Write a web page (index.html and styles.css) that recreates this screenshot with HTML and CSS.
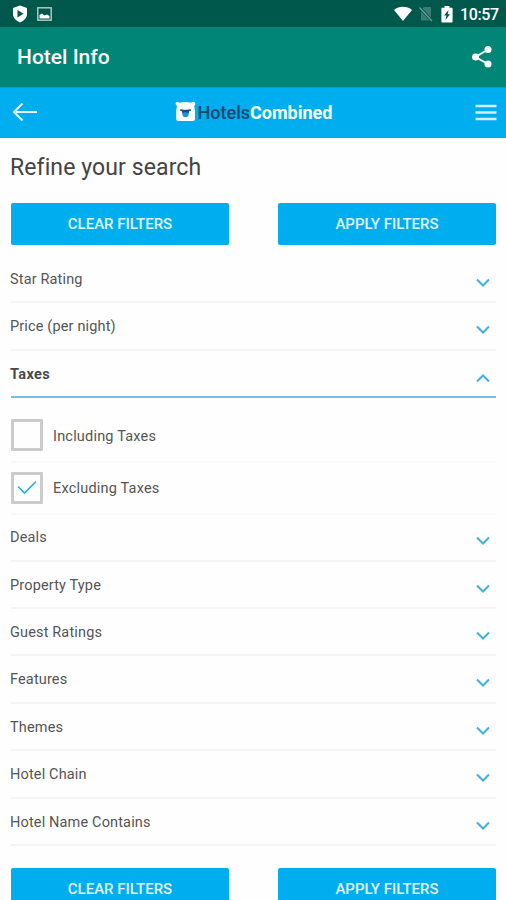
FILE: index.html
```html
<!DOCTYPE html>
<html lang="en">
<head>
<meta charset="utf-8">
<title>Hotel Info</title>
<link rel="stylesheet" href="styles.css">
</head>
<body>
<svg width="0" height="0" class="defs">
  <symbol id="chevron" viewBox="0 0 16 10"><path d="M2 1.500 8 7.500 14 1.500" fill="none" stroke="#42aee6" stroke-width="2"/></symbol>
</svg>
<div class="status">
  <svg class="shield" width="16" height="18" viewBox="0 0 16 18"><path d="M8 .5 15 3v6c0 4-3 6.800-7 8.500C4 15.800 1 13 1 9V3z" fill="#fff"/><path d="M5.500 5 11.500 8.700 5.500 12.400z" fill="#00574b"/></svg>
  <svg class="photo" width="15" height="14" viewBox="0 0 15 14"><rect x=".8" y=".8" width="13.400" height="12.400" fill="none" stroke="#b5d0cb" stroke-width="1.400"/><path d="M2.500 11.500V8L5 6.500l2.500 2L10 7.500l2.500 1.500v2.500z" fill="#fff"/></svg>
  <span class="spacer"></span>
  <svg class="wifi" width="20" height="16" viewBox="0 0 20 16"><path d="M1 4C6-.2 14-.2 19 4L10 15z" fill="#fff"/></svg>
  <svg class="nosim" width="14" height="16" viewBox="0 0 14 16"><path d="M5 1H12v13.500H2V4z" fill="#397c72"/><path d="M.5 1.500 13 15" stroke="#00574b" stroke-width="3"/><path d="M.5 1.500 13 15" stroke="#6c9f97" stroke-width="1.300"/></svg>
  <svg class="battery" width="12" height="17" viewBox="0 0 12 17"><path d="M3.500 0h5v1.800H11q.6 0 .6.600v13.200q0 1-.9 1H1.300q-.9 0-.9-1V2.400q0-.6.600-.6h2.500z" fill="#fff"/><path d="M7.500 4 3 9.500h2.500L4.500 14 9 8.300H6.700z" fill="#00574b"/></svg>
  <span class="time">10:57</span>
</div>
<header class="appbar">
  <span class="title">Hotel Info</span>
  <svg width="22" height="24" viewBox="0 0 22 24"><path d="M17 4.500 4.500 12 17 19" fill="none" stroke="#fff" stroke-width="2"/><g fill="#fff"><circle cx="17" cy="4.500" r="3.500"/><circle cx="4.500" cy="12" r="3.500"/><circle cx="17" cy="19" r="3.500"/></g></svg>
</header>
<nav class="sitebar">
  <svg class="back" width="26" height="20" viewBox="0 0 26 20"><path d="M10.500 .5 2 9l8.500 8.500M2 9h23" fill="none" stroke="#e9f9ff" stroke-width="2"/></svg>
  <div class="logo">
    <svg width="21" height="21" viewBox="0 0 21 21"><path d="M.8 1.500Q2.500.3 4.500 1.800 10.500.2 16 1.800 18-.2 20 1.500q.9 1.800-.8 3.500l.8 5v8q0 2-2 2H3.200q-2 0-2-2v-8l.8-5Q0 3 .8 1.500z" fill="#fff"/><path d="M5 8.500q2-.8 3.500.3h4Q14 7.700 16 8.500v1.300l-1.700.3q-.4 3-2 3.900H9q-2-.9-2.300-3.900L5 9.800z" fill="#194e79"/><path d="M7.300 12q3.200-1.700 6.400 0 .3 4.200-3.200 4.200T7.300 12z" fill="#1596dc"/></svg>
    <span class="hotels">Hotels</span><span class="combined">Combined</span>
  </div>
  <svg class="menu" width="22" height="18" viewBox="0 0 22 18"><path d="M.5 2h21M.5 8.500h21M.5 15h21" stroke="#d4f0fc" stroke-width="2.300"/></svg>
</nav>
<main>
  <h1>Refine your search</h1>
  <div class="actions"><button>CLEAR FILTERS</button><button>APPLY FILTERS</button></div>
  <section class="filters">
    <div class="row"><span>Star Rating</span><svg><use href="#chevron"/></svg></div>
    <div class="row"><span>Price (per night)</span><svg><use href="#chevron"/></svg></div>
    <div class="row open"><span>Taxes</span><svg><use href="#chevron"/></svg></div>
    <div class="option first"><span class="box"></span><span>Including Taxes</span></div>
    <div class="option"><span class="box"><svg width="20" height="16" viewBox="0 0 20 16"><path d="M1 6.500 7.500 13 19 1.500" fill="none" stroke="#27adeb" stroke-width="1.700"/></svg></span><span>Excluding Taxes</span></div>
    <div class="row deals"><span>Deals</span><svg><use href="#chevron"/></svg></div>
    <div class="row"><span>Property Type</span><svg><use href="#chevron"/></svg></div>
    <div class="row"><span>Guest Ratings</span><svg><use href="#chevron"/></svg></div>
    <div class="row"><span>Features</span><svg><use href="#chevron"/></svg></div>
    <div class="row"><span>Themes</span><svg><use href="#chevron"/></svg></div>
    <div class="row"><span>Hotel Chain</span><svg><use href="#chevron"/></svg></div>
    <div class="row"><span>Hotel Name Contains</span><svg><use href="#chevron"/></svg></div>
  </section>
  <div class="actions bottom"><button>CLEAR FILTERS</button><button>APPLY FILTERS</button></div>
</main>
</body>
</html>
```
FILE: styles.css
```css
* { box-sizing: border-box; }
html { overflow: hidden; }
body { margin: 0; width: 506px; height: 900px; overflow: hidden; background: #fefefe; font-family: Roboto, sans-serif; color: #555; }
svg { display: block; flex: none; }
.defs { display: none; }
.status { height: 27px; background: #00574b; display: flex; align-items: center; padding: 1px 8px 0 12px; color: #fff; }
.photo { margin-left: 9px; }
.spacer { flex: 1; }
.nosim { margin-left: 6px; }
.battery { margin-left: 8px; }
.time { margin-left: 7px; font-size: 16px; font-weight: 500; line-height: 26px; padding-top: 1px; width: 38px; white-space: nowrap; letter-spacing: -.4px; }
.appbar { height: 60px; background: #008577; display: flex; align-items: center; justify-content: space-between; padding: 0 13px 0 17px; }
.title { font-size: 21px; font-weight: 500; color: #fff; }
.sitebar { height: 51px; background: #00adef; display: flex; align-items: center; justify-content: space-between; padding: 0 9px 0 12px; border-top: 1px solid #079fc7; }
.logo { display: flex; align-items: center; font-size: 18px; font-weight: 700; line-height: 22px; margin-right: 6px; }
.logo svg { margin: -4px 2px 0 0; }
.hotels { color: #17466c; font-weight: 500; }
.combined { color: #fff; }
main { padding: 0 10px 0 11px; }
h1 { margin: 0; padding-top: 14px; height: 65px; font-size: 23px; line-height: 32px; font-weight: 400; color: #444; letter-spacing: .1px; margin-left: -1px; }
.actions { display: flex; gap: 49px; }
button { flex: 1; height: 42px; border: 0; border-radius: 2px; background: #00adef; color: #e3f7ff; font: 500 15px Roboto, sans-serif; padding: 0; }
.filters { padding-top: 10.800px; font-size: 14.500px; }
.row { height: 47.450px; border-bottom: 2px solid #f4f4f4; display: flex; align-items: center; justify-content: space-between; padding-right: 5px; letter-spacing: .15px; }
.row span { margin-left: -1px; padding-top: 1.500px; }
.row svg { width: 16px; height: 10px; margin-top: 8.500px; }
.open { border-color: #73bcec; font-weight: 700; color: #4a4a4a; letter-spacing: .35px; }
.open svg { transform: rotate(180deg); }
.option { height: 52.500px; border-bottom: 2px solid #f9f9f9; display: flex; align-items: center; gap: 10px; letter-spacing: .2px; }
.option.first { height: 64.800px; padding-top: 11px; }
.option.first span:last-child { padding-top: 2px; }
.box { width: 32px; height: 32px; border: 3px solid #cbcbcb; border-radius: 1px; display: flex; align-items: center; justify-content: center; }
.deals { height: 46.200px; }
.deals span { padding-top: 0; }
.deals svg { margin-top: 6.500px; }
.bottom { padding-top: 22px; }
```
